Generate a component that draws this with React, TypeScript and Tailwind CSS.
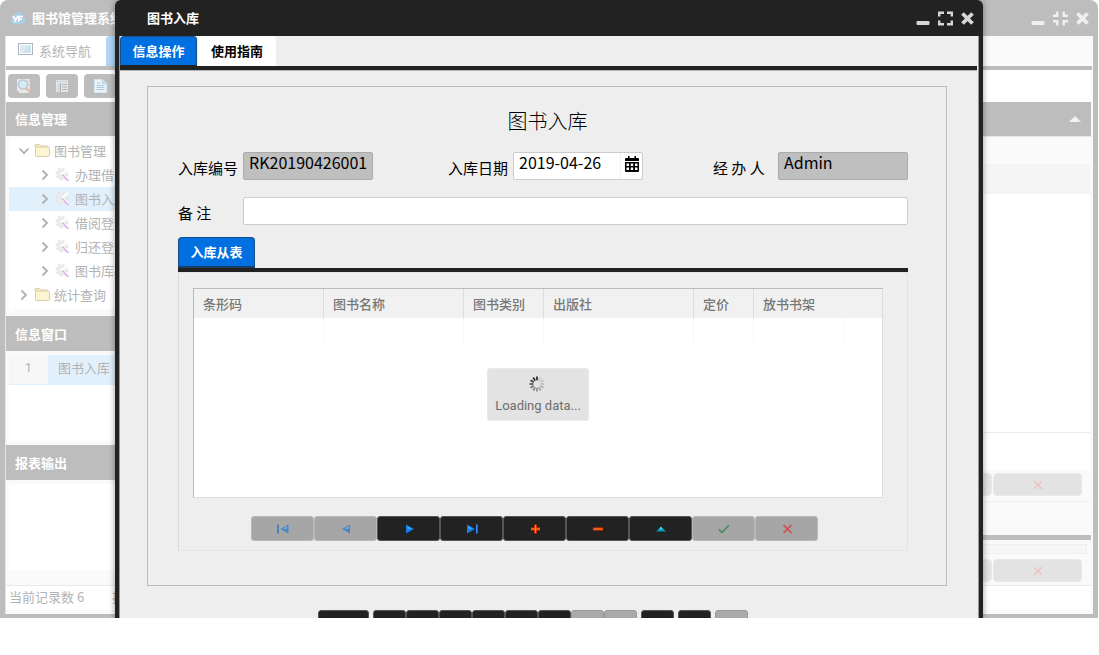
import React from 'react';

const treeItems = ['办理借书证', '图书入库', '借阅登记', '归还登记', '图书库存'];

const columns = [
  { name: '条形码', width: 'w-[130px]' },
  { name: '图书名称', width: 'w-[140px]' },
  { name: '图书类别', width: 'w-[80px]' },
  { name: '出版社', width: 'w-[150px]' },
  { name: '定价', width: 'w-[60px]' },
  { name: '放书书架', width: 'w-[90px]' },
];

function WindowControls({ restore, color }: { restore?: boolean; color: string }) {
  return (
    <div className={`flex items-center gap-2 ${color}`}>
      <button type="button" aria-label="最小化">
        <svg width="14" height="14" viewBox="0 0 14 14" className="block">
          <rect x="0.5" y="10" width="13" height="4" rx="1" fill="currentColor" />
        </svg>
      </button>
      <button type="button" aria-label={restore ? '还原' : '最大化'}>
        <svg width="15" height="15" viewBox="0 0 15 14" className="block" fill="none" stroke="currentColor" strokeWidth="2.4">
          {restore ? (
            <path d="M0 4.300h4.300V0M10.700 0v4.300H15M15 9.700h-4.300V14M4.300 14V9.700H0" />
          ) : (
            <path d="M1.2 5V1.2H6M9 1.2h4.8V5M13.8 9v3.8H9M6 12.8H1.2V9" />
          )}
        </svg>
      </button>
      <button type="button" aria-label="关闭">
        <svg width="13" height="14" viewBox="0 0 13 14" className="block" stroke="currentColor" strokeWidth="3.8">
          <path d="M1.5 2.500l10 10M11.5 2.500l-10 10" />
        </svg>
      </button>
    </div>
  );
}

function Chevron({ open }: { open?: boolean }) {
  return (
    <svg width="12" height="12" viewBox="0 0 12 12" fill="none" stroke="#b0b0b0" strokeWidth="1.8" className="shrink-0">
      <path d={open ? 'M1.5 3.5L6 8.2l4.500-4.700' : 'M3.500 1.500L8 6l-4.500 4.500'} />
    </svg>
  );
}

function Folder() {
  return (
    <svg width="16" height="14" viewBox="0 0 16 14" className="shrink-0">
      <path d="M.5 2.500Q.5.5 2 .5h3.500l1.500 1.500h6.500V11" fill="#f6ecc4" stroke="#dcd1a4" />
      <path d="M1.500 4q0-1 1-1H14q1.500 0 1.500 1.500v6.500q0 1.500-1.500 1.500H2.500q-1 0-1-1z" fill="#fdf5d0" stroke="#d8cea6" />
    </svg>
  );
}

function Gear() {
  return (
    <svg width="16" height="16" viewBox="0 0 16 16" className="shrink-0" fill="none">
      <circle cx="7" cy="7" r="3.500" stroke="#ececec" strokeWidth="4" />
      <circle cx="7" cy="7" r="5.800" stroke="#e2e2e2" strokeWidth="1.500" strokeDasharray="2 2.500" />
      <path d="M7.500 6.500L13.500 2M7.500 7l5.500 6" stroke="#fff" strokeWidth="2" />
      <path d="M7 7.500l2.500 2" stroke="#c9b5c9" strokeWidth="1.300" />
      <path d="M9 9.500l4.500 4.500" stroke="#e0aef4" strokeWidth="1.600" />
    </svg>
  );
}

function SectionHeader({ children, first }: { children: React.ReactNode; first?: boolean }) {
  return (
    <h2 className={`flex items-center bg-[#bdbdbd] px-[9px] text-[13px] font-bold text-white ${first ? 'h-[34px]' : 'h-[35px]'}`}>
      {children}
    </h2>
  );
}

function PaleButtons() {
  return (
    <div className="flex justify-end gap-px pr-[9px]">
      {[0, 1].map((i) => (
        <button key={i} type="button" aria-label="取消" className="flex h-[23px] w-[89px] items-center justify-center rounded border border-[#e9e9e9] bg-[#e3e3e3]">
          <svg width="10" height="10" viewBox="0 0 10 10" stroke="#f0c4c4" strokeWidth="1.600">
            <path d="M1 1l8 8M9 1L1 9" />
          </svg>
        </button>
      ))}
    </div>
  );
}

function ToolIcon({ kind }: { kind: number }) {
  if (kind === 0)
    return (
      <svg width="16" height="16" viewBox="0 0 16 16" fill="none">
        <path d="M1 1h13v14H1z" fill="#e9e9e9" />
        <path d="M1 13l2 2M1 15l2-2M12 3h2M12 7h2" stroke="#c0c0c0" />
        <circle cx="7" cy="6.500" r="4.500" fill="#d5ecf7" stroke="#b9c9d3" strokeWidth="1.500" />
        <path d="M10 10l4 4" stroke="#e6bcae" strokeWidth="2.500" />
      </svg>
    );
  if (kind === 1)
    return (
      <svg width="14" height="14" viewBox="0 0 14 14">
        <path d="M1 1h12v12H1z" fill="#e6e6e6" />
        <path d="M1 2.500h12" stroke="#cfdce4" strokeWidth="2" />
        <path d="M2 5h3v7H2z" fill="#c9dce8" />
        <path d="M7 5.500h5M7 8h5M7 10.500h5M5.500 4v9" stroke="#b0b0b0" />
      </svg>
    );
  return (
    <svg width="13" height="14" viewBox="0 0 13 14">
      <path d="M.5.500h8l4 4v9H.5z" fill="#edf5fa" stroke="#d3e6f0" />
      <path d="M8.500.500v4h4" fill="#cfe3ef" stroke="#b5d0e0" />
      <path d="M2.500 4h4M2.500 6.500h8M2.500 8.500h8M2.500 10.500h8" stroke="#a9c8da" />
    </svg>
  );
}

function MainWindow() {
  return (
    <div className="overflow-hidden rounded-t-lg bg-[#bdbdbd] px-[5px] pb-1 text-[#b3b3b3]">
      <header className="flex h-9 items-center justify-between pl-[5px] pr-1">
        <div className="flex items-center gap-[6px]">
          <svg width="16" height="14" viewBox="0 0 16 14">
            <path d="M4 13Q.5 12.500.5 9.500T3.500 6Q4 1 8.500 1T13 5.500q2.500.5 2.500 3.500T12 13z" fill="#a9cfe4" />
            <path d="M3 5l2.500 4M8 5l-3.500 6M8.500 11L9 5.500h4M9 8h3" stroke="#fff" strokeWidth="1.700" fill="none" />
          </svg>
          <h1 className="text-[13px] font-bold text-white">图书馆管理系统</h1>
        </div>
        <WindowControls restore color="text-[#f0f0f0]" />
      </header>
      <div className="border-l border-[#e4e4e4] bg-[#fafafa]">
        <nav className="mr-px flex h-[34px] border-b-4 border-[#bdbdbd]">
          <button type="button" className="flex w-[100px] items-center gap-[6px] bg-white pl-3 text-[13px]">
            <svg width="15" height="12" viewBox="0 0 15 12" className="mb-1">
              <rect x=".5" y=".5" width="14" height="11" fill="#fff" stroke="#adb5ba" />
              <rect x="2" y="2" width="11" height="8" fill="#cfe3ee" />
              <path d="M2 2h9L4 10H2z" fill="#dcebf3" />
            </svg>
            系统导航
          </button>
          <button type="button" aria-label="打开的页面" className="w-[90px] rounded-t bg-[#b2d4f6]" />
        </nav>
        <div className="mr-[2px] flex h-8 items-center gap-[6px] bg-white pl-[2px]">
          {['查询', '列表', '文档'].map((label, i) => (
            <button key={label} type="button" aria-label={label} className="flex h-6 w-8 items-center justify-center rounded bg-[#bdbdbd]">
              <ToolIcon kind={i} />
            </button>
          ))}
        </div>
        <div className="mr-[2px] flex">
          <aside className="w-[234px] bg-[#fafafa]">
            <SectionHeader first>信息管理</SectionHeader>
            <div className="px-[3px] pb-[7px] pt-px">
              <ul className="bg-white py-[2px] text-[13px]">
                <li className="flex h-6 items-center gap-1 pl-[9px]"><Chevron open /><Folder />图书管理</li>
                {treeItems.map((name) => (
                  <li key={name} className={`flex h-6 items-center gap-1 pl-[30px] ${name === '图书入库' ? 'bg-[#e1f0fb]' : ''}`}>
                    <Chevron />
                    <Gear />
                    {name}
                  </li>
                ))}
                <li className="flex h-6 items-center gap-1 pl-[9px]"><Chevron /><Folder />统计查询</li>
              </ul>
            </div>
            <SectionHeader>信息窗口</SectionHeader>
            <div className="px-[3px] py-1">
              <div className="h-[86px] bg-white">
                <div className="flex h-[30px] bg-[#e1f0fb] text-[13px] leading-[26px]">
                  <span className="w-[39px] border-b border-[#e1f0fb] bg-[#f7f7f7] text-center font-[Roboto,sans-serif]">1</span>
                  <span className="pl-[10px]">图书入库</span>
                </div>
              </div>
            </div>
            <SectionHeader>报表输出</SectionHeader>
            <div className="px-[3px] pb-[15px] pt-1">
              <div className="h-[86px] bg-white" />
            </div>
          </aside>
          <main className="flex flex-1 flex-col">
            <div className="flex h-[34px] items-center justify-end bg-[#bdbdbd] pr-[10px]">
              <button type="button" aria-label="收起">
                <svg width="12" height="6" viewBox="0 0 12 6" className="block"><path d="M6 0l6 6H0z" fill="#f2f2f2" /></svg>
              </button>
            </div>
            <div className="h-7 border-t border-[#e6e6e6]" />
            <div className="mr-px h-[30px] bg-[#f5f5f5]" />
            <div className="mr-px h-[239px] border-b border-[#ececec] bg-white" />
            <div className="mr-px h-[37px] bg-white" />
            <div className="border-b border-[#efefef] pb-[5px] pt-[3px]"><PaleButtons /></div>
            <div className="h-[33px]" />
            <div className="h-[5px] bg-[#bdbdbd]" />
            <div className="mr-1 mt-[4px] h-[10px] border border-[#efefef] bg-[#f6f6f6]" />
            <div className="pt-[5px]"><PaleButtons /></div>
          </main>
        </div>
        <footer className="mr-[2px] border-b-4 border-t border-b-[#fafafa] border-t-[#e9e9e9] bg-white">
          <p className="flex h-6 gap-[28px] pl-[3px] text-[13px] leading-[22px]"><span>当前记录数 6</span><span>提示</span></p>
        </footer>
      </div>
    </div>
  );
}

function Field({ id, label, children }: { id: string; label: string; children: React.ReactNode }) {
  return (
    <div className="flex w-[195px] items-center">
      <label htmlFor={id} className="w-[65px] shrink-0 whitespace-nowrap pt-1 text-[15px] leading-6">{label}</label>
      {children}
    </div>
  );
}

const fieldStyle = 'h-7 w-full min-w-0 rounded-[2px] border px-[5px] pb-2 text-[16px] outline-none';

function Spinner() {
  return (
    <svg width="16" height="16" viewBox="0 0 16 16" stroke="#222" strokeWidth="1.700" className="-translate-x-px">
      {[0.12, 0.15, 0.2, 0.25, 0.35, 0.45, 0.5, 0.6, 0.75, 0.85, 0.95, 1].map((opacity, i) => (
        <path key={i} d="M8 .5v3.800" opacity={opacity} transform={`rotate(${i * 30 + 30} 8 8)`} />
      ))}
    </svg>
  );
}

const navIcons = [
  { label: '首条', off: true, icon: <><path d="M0 .5h2v9H0z" fill="#4a82bd" /><path d="M11.500.500v9L3.500 5z" fill="#4a86c4" /><path d="M10 2.500v2L6 5z" fill="#8fbbe4" /></> },
  { label: '上一条', off: true, icon: <><path d="M10 .5v9L2 5z" fill="#4a86c4" /><path d="M8.500 2.500v2L4.500 5z" fill="#8fbbe4" /></> },
  { label: '下一条', off: false, icon: <><path d="M3 .500v9l8-4.500z" fill="#1080ee" /><path d="M4.500 2.500v2l4 .5z" fill="#6bb8ff" /></> },
  { label: '末条', off: false, icon: <><path d="M1 .500v9l8-4.500z" fill="#1080ee" /><path d="M2.500 2.500v2l4 .5z" fill="#6bb8ff" /><path d="M10 .500h1.700v9H10z" fill="#2f8bf5" /></> },
  { label: '新增', off: false, icon: <><path d="M6.500.5v9M2 5h9" stroke="#e62c00" strokeWidth="2.800" /><path d="M6.500 1v8M2 5h9" stroke="#ff8a2a" /></> },
  { label: '删除', off: false, icon: <><path d="M1 5h10" stroke="#e62c00" strokeWidth="3" /><path d="M1.500 5h9" stroke="#ff8a2a" /></> },
  { label: '编辑', off: false, icon: <><path d="M6 2.500L11 7.500H1z" fill="#0796ae" /><path d="M6 2.500L8 5.500H4z" fill="#3fd4ee" /></> },
  { label: '保存', off: true, icon: <path d="M1 5.500l3 3L11 1" fill="none" stroke="#4f8c64" strokeWidth="1.800" /> },
  { label: '取消', off: true, icon: <path d="M2.500 1l8 8M10.500 1l-8 8" stroke="#cd5149" strokeWidth="1.700" /> },
];

const bottomGroups = [[false, false, false, false, false, false, true, true], [false], [false], [true]];

function EntryDialog() {
  return (
    <section role="dialog" aria-labelledby="dialog-title" className="absolute inset-y-0 left-[115px] right-[115px] overflow-hidden rounded-t-md bg-[#222] px-1 text-black shadow-[0_0_6px_rgba(0,0,0,0.4)]">
      <header className="flex h-9 items-center justify-between pl-7 pr-[5px]">
        <h2 id="dialog-title" className="text-[13px] font-bold text-white">图书入库</h2>
        <WindowControls color="text-[#d6d6d6]" />
      </header>
      <div className="border-x border-[#999] bg-[#eee] pb-6">
        <div className="mr-px border-b border-[#b5b5b5] text-[13px] font-bold">
          <div role="tablist" className="flex h-[34px] gap-px border-b-4 border-[#222]">
            <button role="tab" aria-selected="true" type="button" className="w-[77px] rounded-t border border-[#174f8c] border-b-[#222] bg-[#006fe0] text-white">信息操作</button>
            <button role="tab" aria-selected="false" type="button" className="w-[78px] rounded-t bg-white">使用指南</button>
          </div>
        </div>
        <form className="ml-[27px] mr-[31px] mt-[15px] border border-[#bbb] px-[30px] pb-[34px]">
          <h3 className="pb-[16px] pl-px pt-[19px] text-center text-[20px] font-light leading-[30px]">图书入库</h3>
          <div className="mr-2 grid grid-cols-[270fr_265fr_195px]">
            <Field id="code" label="入库编号">
              <input id="code" readOnly defaultValue="RK20190426001" className={`${fieldStyle} border-[#aaa] bg-[#bfbfbf]`} />
            </Field>
            <Field id="date" label="入库日期">
              <div className="flex h-7 w-full rounded-[2px] border border-[#ccc] bg-white">
                <input id="date" defaultValue="2019-04-26" className="w-0 flex-1 px-[5px] pb-2 text-[16px] outline-none" />
                <button type="button" aria-label="选择日期" className="flex w-[22px] items-start justify-center border-l border-[#f3f3f3] pt-[3px]">
                  <svg width="14" height="17" viewBox="0 0 14 17">
                    <path d="M0 3q0-1 1-1h2V0h1.500v2h5V0H11v2h2q1 0 1 1v12q0 1-1 1H1q-1 0-1-1z" fill="#000" />
                    <path d="M0 5.500h14" stroke="#fff" />
                    <path d="M1.500 7.500H4v2.500H1.500zM5.700 7.500h2.500v2.500H5.700zM10 7.500h2.500v2.500H10zM1.500 11.500H4V14H1.500zM5.700 11.500h2.500V14H5.700zM10 11.500h2.500V14H10z" fill="#fff" />
                  </svg>
                </button>
              </div>
            </Field>
            <Field id="operator" label="经 办 人">
              <input id="operator" readOnly defaultValue="Admin" className={`${fieldStyle} border-[#aaa] bg-[#bfbfbf]`} />
            </Field>
          </div>
          <div className="mr-2 mt-[17px] flex items-center">
            <label htmlFor="remark" className="w-[65px] shrink-0 pt-1 text-[15px] leading-6">备 注</label>
            <input id="remark" className={`${fieldStyle} border-[#ccc] bg-white`} />
          </div>
          <div role="tablist" className="mr-2 mt-3 border-b-4 border-[#222]">
            <button role="tab" aria-selected="true" type="button" className="block h-[31px] w-[77px] rounded-t border border-b-2 border-[#174f8c] border-b-[#1c3f66] bg-[#006fe0] text-[13px] font-bold text-white">入库从表</button>
          </div>
          <div className="mr-2 border border-[#e4e4e4] border-l-[#d9d9d9] px-[14px] pb-[9px] pt-[15px]">
            <div className="relative mr-[10px] h-[210px] overflow-hidden border border-[#ddd] border-l-[#bbb] border-t-[#bbb] bg-white">
              <table className="w-full table-fixed border-separate border-spacing-0 text-left text-[13px] text-[#777]">
                <thead>
                  <tr className="h-[29px] bg-[#f1f1f1]">
                    {columns.map((c, i) => (
                      <th key={c.name} scope="col" className={`${c.width} whitespace-nowrap px-[9px] font-medium ${i < 5 ? 'border-r border-[#dcdcdc]' : ''}`}>{c.name}</th>
                    ))}
                    <td />
                  </tr>
                </thead>
                <tbody>
                  <tr className="h-6">
                    {columns.map((c) => <td key={c.name} className="border-r border-[#f7f7f7]" />)}
                    <td />
                  </tr>
                </tbody>
              </table>
              <div role="status" className="absolute left-1/2 top-[79px] flex h-[53px] w-[102px] -translate-x-1/2 flex-col items-center rounded-[3px] border border-[#e9e9e9] bg-[#e3e3e3] pt-[7px] font-[Roboto,sans-serif] text-[13px] leading-[28px] text-[#6e6e6e]">
                <Spinner />
                Loading data...
              </div>
            </div>
            <div className="mr-[9px] mt-[18px] flex justify-center pr-[8px]">
              {navIcons.map((b) => (
                <button key={b.label} type="button" aria-label={b.label} className={`flex h-[25px] w-[63px] items-center justify-center rounded-[3px] border ${b.off ? 'border-[#b9b9b9] bg-[#a6a6a6]' : 'border-[#555] bg-[#222]'}`}>
                  <svg width="12" height="10" viewBox="0 0 12 10">{b.icon}</svg>
                </button>
              ))}
            </div>
          </div>
        </form>
        <div className="mt-6 flex justify-center gap-1 pr-8">
          <button type="button" aria-label="查询" className="h-6 w-[51px] rounded-[3px] border border-[#555] bg-[#222]" />
          {bottomGroups.map((group, g) => (
            <div key={g} className="flex">
              {group.map((off, i) => (
                <button key={i} type="button" aria-label={`操作 ${g + 1}-${i + 1}`} className={`h-6 w-[33px] rounded-[3px] border ${off ? 'border-[#999] bg-[#a9a9a9]' : 'border-[#555] bg-[#222]'}`} />
              ))}
            </div>
          ))}
        </div>
      </div>
    </section>
  );
}

export default function App() {
  return (
    <div className="min-h-screen bg-white font-['Noto_Sans_CJK_SC',sans-serif]">
      <div className="relative mr-px overflow-hidden">
        <MainWindow />
        <EntryDialog />
      </div>
    </div>
  );
}
